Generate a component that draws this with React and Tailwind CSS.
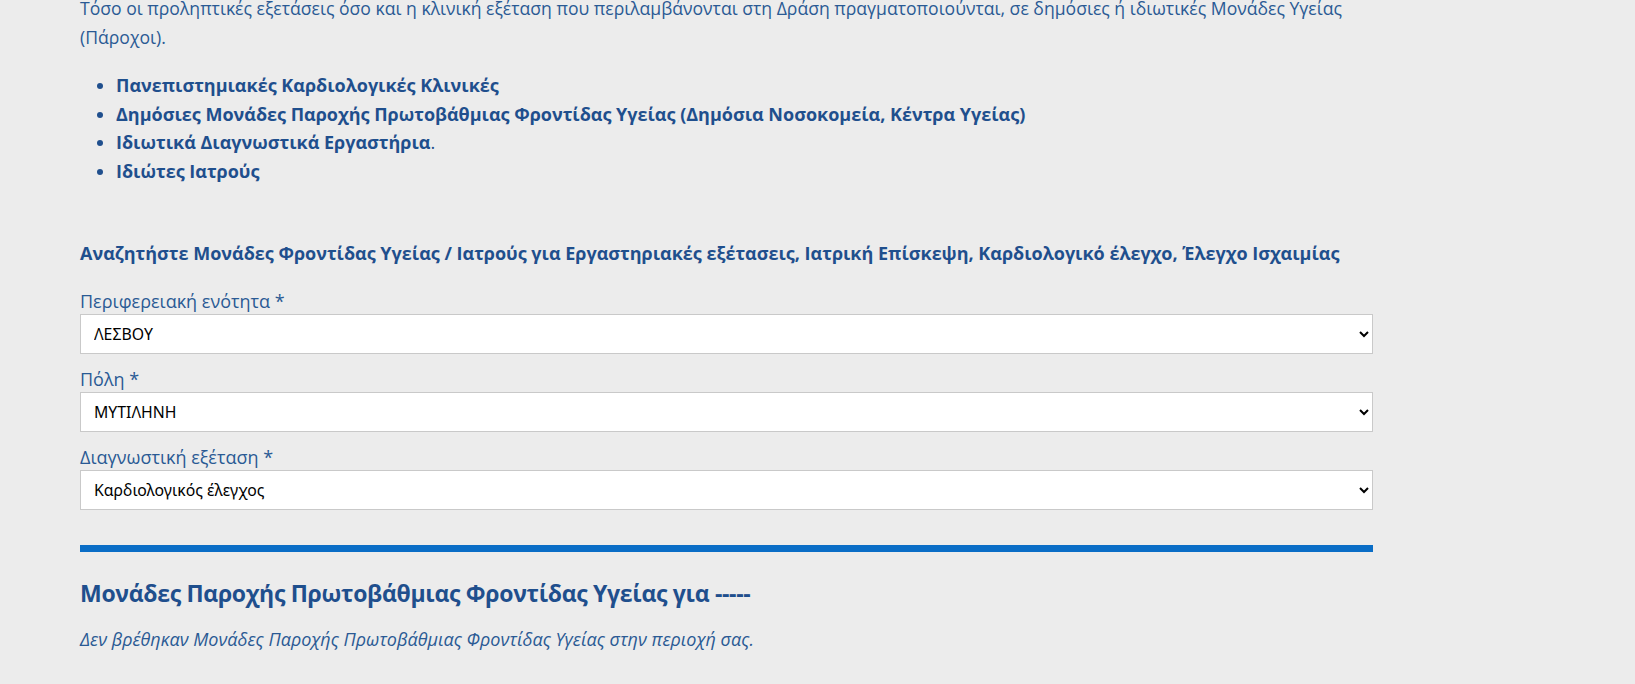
import React from 'react'

const font = { fontFamily: '"Open Sans", "Noto Sans", sans-serif' }

const providers = [
  { text: 'Πανεπιστημιακές Καρδιολογικές Κλινικές' },
  { text: 'Δημόσιες Μονάδες Παροχής Πρωτοβάθμιας Φροντίδας Υγείας (Δημόσια Νοσοκομεία, Κέντρα Υγείας)' },
  { text: 'Ιδιωτικά Διαγνωστικά Εργαστήρια', tail: '.' },
  { text: 'Ιδιώτες Ιατρούς' },
]

const fields = [
  { label: 'Περιφερειακή ενότητα *', value: 'ΛΕΣΒΟΥ' },
  { label: 'Πόλη *', value: 'ΜΥΤΙΛΗΝΗ' },
  { label: 'Διαγνωστική εξέταση *', value: 'Καρδιολογικός έλεγχος' },
]

function Field({ label, value }) {
  return (
    <div className="flex flex-col">
      <label className="text-[18px] leading-[26px] text-[#2a5a94]">{label}</label>
      <select
        defaultValue={value}
        className="h-[40px] w-full border border-[#c9c9c9] bg-white pl-[9px] pr-2 text-[15.8px] text-black"
        style={{ fontFamily: '"Noto Sans", "DejaVu Sans", sans-serif' }}
      >
        <option value={value}>{value}</option>
      </select>
    </div>
  )
}

export default function App() {
  return (
    <div className="min-h-[684px] w-full overflow-hidden bg-[#ececec]" style={font}>
      <div className="ml-[80px] mt-[-6px] w-[1293px] text-[#1f4f8d]">
        <p className="text-[17.6px] leading-[29px] text-[#2a5a94]">
          Τόσο οι προληπτικές εξετάσεις όσο και η κλινική εξέταση που περιλαμβάνονται στη Δράση πραγματοποιούνται, σε δημόσιες ή ιδιωτικές Μονάδες Υγείας (Πάροχοι).
        </p>

        <ul className="mt-[19px] list-disc pl-[36px] text-[18px] leading-[28.5px] marker:text-[#1f4f8d]">
          {providers.map((p) => (
            <li key={p.text}>
              <strong className="font-bold">{p.text}</strong>
              {p.tail}
            </li>
          ))}
        </ul>

        <h4 className="mt-[55px] text-[18px] font-bold leading-[26px]">
          Αναζητήστε Μονάδες Φροντίδας Υγείας / Ιατρούς για Εργαστηριακές εξέτασεις, Ιατρική Επίσκεψη, Καρδιολογικό έλεγχο, Έλεγχο Ισχαιμίας
        </h4>

        <div className="mt-[22px] flex flex-col gap-[12px]">
          {fields.map((f) => (
            <Field key={f.label} {...f} />
          ))}
        </div>

        <div className="mt-[35px] h-[7px] bg-[#0a6dc6]" />

        <h3 className="mt-[25px] text-[23px] font-bold leading-[32px] tracking-[-0.3px]">
          Μονάδες Παροχής Πρωτοβάθμιας Φροντίδας Υγείας για -----
        </h3>

        <p className="mt-[17px] text-[18px] italic leading-[26px] text-[#2a5a94]">
          Δεν βρέθηκαν Μονάδες Παροχής Πρωτοβάθμιας Φροντίδας Υγείας στην περιοχή σας.
        </p>
      </div>
    </div>
  )
}
